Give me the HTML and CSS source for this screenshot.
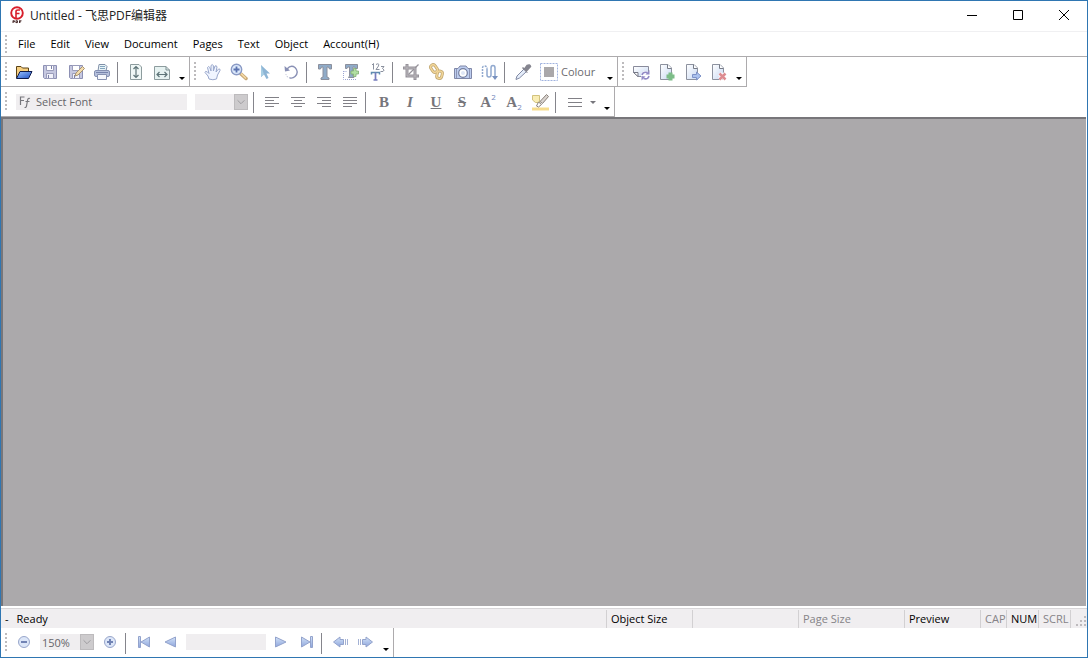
FILE: index.html
```html
<!DOCTYPE html>
<html lang="en">
<head>
<meta charset="utf-8">
<title>Untitled - 飞思PDF编辑器</title>
<link rel="stylesheet" href="styles.css">
</head>
<body>
<svg width="0" height="0" class="defs" aria-hidden="true">
  <defs>
    <linearGradient id="blue" x1="0" y1="0" x2="0" y2="1"><stop offset="0" stop-color="#d3e3f8"/><stop offset="1" stop-color="#8ea5dc"/></linearGradient>
    <linearGradient id="sheet" x1="0" y1="0" x2="1" y2="1"><stop offset="0" stop-color="#ffffff"/><stop offset="1" stop-color="#c9d9f3"/></linearGradient>
    <linearGradient id="folder" x1="0" y1="0" x2="1" y2="1"><stop offset="0" stop-color="#9cc4ff"/><stop offset="1" stop-color="#1c4fc4"/></linearGradient>
  </defs>
</svg>
<div class="window">
  <header class="titlebar">
    <svg class="logo" viewBox="0 0 16 18"><circle cx="8" cy="7" r="5.8" fill="none" stroke="#d81f2c" stroke-width="1.9"/><path d="M7 12V5.500Q7 4 9 4H11M7 7.500H10.500" fill="none" stroke="#d81f2c" stroke-width="1.600"/><path d="M4 14.500V17M4 14.800H5.500V15.800H4M7 14.500V17M7 14.800H8.500V16.600H7M10.500 14.500V17M10.500 14.800H12.500M10.500 15.900H12" fill="none" stroke="#3a1a1a" stroke-width=".9"/></svg>
    <h1>Untitled - 飞思PDF编辑器</h1>
    <button class="win" aria-label="Minimize"><svg viewBox="0 0 12 12"><path d="M1 6.500H11" /></svg></button>
    <button class="win" aria-label="Maximize"><svg viewBox="0 0 12 12"><path d="M1.500 1.500H10.500V10.500H1.500Z"/></svg></button>
    <button class="win" aria-label="Close"><svg viewBox="0 0 12 12"><path d="M1 1L11 11M11 1L1 11"/></svg></button>
  </header>
  <nav class="menubar">
    <span class="grip"></span>
    <button>File</button><button>Edit</button><button>View</button><button>Document</button><button>Pages</button><button>Text</button><button>Object</button><button>Account(H)</button>
  </nav>
  <div class="bars">
    <div class="toolbar" role="toolbar" aria-label="Standard">
      <span class="grip"></span>
      <button class="tool" aria-label="Open"><svg viewBox="0 0 18 18"><path d="M1.500 15V3.500H6L7.500 5H13.500V8" fill="#f6cf80" stroke="#5b4316"/><path d="M1.500 15.500L5 8.500H17L13.500 15.500Z" fill="url(#folder)" stroke="#0d1b4c"/></svg></button>
      <button class="tool" aria-label="Save"><svg viewBox="0 0 18 18"><path d="M2.500 2.500H15.500V15.500H3.500L2.500 14.500Z" fill="#c6c8e0" stroke="#8d90b4"/><path d="M5.500 2.500H12.500V7.500H5.500Z" fill="#fff" stroke="#9a9dbb"/><path d="M5.500 10.500H12.500V15.500H5.500Z" fill="#f2f2fa" stroke="#9a9dbb"/><path d="M7.500 12V15M10.500 3V6" stroke="#7c80a8"/></svg></button>
      <button class="tool" aria-label="Save as"><svg viewBox="0 0 18 18"><path d="M2.500 2.500H15.500V15.500H3.500L2.500 14.500Z" fill="#c6c8e0" stroke="#8d90b4"/><path d="M5.500 2.500H12.500V7.500H5.500Z" fill="#fff" stroke="#9a9dbb"/><path d="M5.500 10.500H12.500V15.500H5.500Z" fill="#f2f2fa" stroke="#9a9dbb"/><path d="M7.500 12V15" stroke="#7c80a8"/><path d="M8 13L9 10L15.500 3.500L17.500 5.500L11 12Z" fill="#f3dcae" stroke="#a89470"/></svg></button>
      <button class="tool" aria-label="Print"><svg viewBox="0 0 18 18"><path d="M5 8L6 1.500H12L14 3.500L13 8" fill="#eaf4f8" stroke="#8090a8"/><path d="M7 3.500H12M7 5.500H12" stroke="#83a5bd"/><rect x="1.500" y="7.500" width="15" height="6" rx="1.500" fill="#b5c0dc" stroke="#8590b2"/><path d="M4.500 11.500H13.500V16.500H4.500Z" fill="#f5f7fc" stroke="#8792b2"/><path d="M3 9.500H15" stroke="#7784ad"/></svg></button>
      <span class="sep"></span>
      <button class="tool" aria-label="Fit height"><svg viewBox="0 0 18 18"><path d="M3.500 1.500H12L14.500 4V16.500H3.500Z" fill="#eff7f6" stroke="#8d9c9e"/><path d="M9 4V14M6.500 6L9 3.500L11.500 6M6.500 12L9 14.500L11.500 12" fill="none" stroke="#5e7478" stroke-width="1.200"/></svg></button>
      <button class="tool" aria-label="Fit width"><svg viewBox="0 0 18 18"><path d="M1.500 3.500H13L16.500 7V16.500H1.500Z" fill="#e6f2f1" stroke="#8d9c9e"/><path d="M13 3.500V7H16.500" fill="none" stroke="#7d8f92"/><path d="M4 11.500H14M6.500 9L4 11.500L6.500 14M11.500 9L14 11.500L11.500 14" fill="none" stroke="#5e7478" stroke-width="1.200"/></svg></button>
      <button class="more" aria-label="More standard tools"></button>
    </div>
    <div class="toolbar" role="toolbar" aria-label="Editing">
      <span class="grip"></span>
      <button class="tool" aria-label="Hand"><svg viewBox="0 0 18 18"><path d="M5 16L4 13L1 9.500Q1 7.500 3.500 9L5 10.500L3.500 4.500Q4.500 2.500 5.800 4.500L7 8L7 2.500Q8.200 .8 9.400 2.500V8L11 3Q12.500 2 13 4L12 9L14.500 6Q16.500 5.500 16 7.500L13.500 12L12.500 16Q9 17.500 5 16Z" fill="#f0f5ff" stroke="#9aa8cc"/></svg></button>
      <button class="tool" aria-label="Zoom"><svg viewBox="0 0 18 18"><path d="M11 11L16 15.500" stroke="#c8a878" stroke-width="3.500" stroke-linecap="round"/><path d="M11 10.500L16 15.500" stroke="#f7dba5" stroke-width="1.500"/><circle cx="6.500" cy="6.500" r="5.200" fill="#dce9fb" stroke="#8a9ac5" stroke-width="1.400"/><path d="M3.500 6.500H9.500M6.500 3.500V9.500" stroke="#5b72af" stroke-width="1.800"/></svg></button>
      <button class="tool" aria-label="Select"><svg viewBox="0 0 18 18"><path d="M5 2V14L8 11.500L10.500 16L12.500 15L10.500 10.500H14Z" fill="#8eb5d5"/><path d="M5 2V14L8 11.500" fill="#a9cfe4"/></svg></button>
      <button class="tool" aria-label="Rotate"><svg viewBox="0 0 18 18"><path d="M5 6Q9 1.500 13 4.500Q17.500 9 13 13.500Q11 15.500 8 15" fill="none" stroke="#8990b5" stroke-width="1.400"/><path d="M8 15Q5 14.500 4 11.500" fill="none" stroke="#8990b5" stroke-dasharray="1 1.500"/><path d="M2.500 3L3 8.500L8 7.500Z" fill="#8990b5"/></svg></button>
      <span class="sep"></span>
      <button class="tool" aria-label="Edit text"><svg viewBox="0 0 18 18"><path d="M2.500 1.500H15.500V6H13.500L12.500 4H11V14L13 15V16.500H5V15L7 14V4H5.500L4.500 6H2.500Z" fill="#8fabc8" stroke="#8b8f9c"/></svg></button>
      <button class="tool" aria-label="Add text"><svg viewBox="0 0 18 18"><path d="M1.500 8V16.500H15M1.500 8.500H5" fill="none" stroke="#9ca5d2" stroke-dasharray="1 1"/><path d="M3.500 1.500H15.500V5.500H13.500L12.500 4H11V13L12 14.500H6.500L7.500 13V4H6L5 5.500H3.500Z" fill="#8fabc8" stroke="#8b8f9c"/><path d="M11.500 5.500H14V8H16.500V11H14V13.500H11.500V11H9V8H11.500Z" fill="#b1dfa2" stroke="#80ac72" stroke-width=".8"/></svg></button>
      <button class="tool" aria-label="Number text"><svg viewBox="0 0 18 18"><path d="M4 2L5.500 .5V6.500M8 1.500Q11.500 -.5 10.500 3L8 6.500H11.500M13 3.500H16L14.500 5.500Q17.500 7 15 8.500H12.500" fill="none" stroke="#8a909e"/><path d="M3.500 11.500V9.500H11.500V11.500" fill="none" stroke="#5f8cb0" stroke-width="1.500"/><path d="M7.500 9.500V17M5.500 17H9.500" fill="none" stroke="#777dbd" stroke-width="1.700"/></svg></button>
      <span class="sep"></span>
      <button class="tool" aria-label="Crop"><svg viewBox="0 0 18 18"><path d="M5 1V13H17M1 5H13V17" fill="none" stroke="#96929a" stroke-width="3"/><path d="M6.500 11.500L16.500 1.500" stroke="#96929a" stroke-width="1.200"/><path d="M5 2V13H16M2 5H13V16" fill="none" stroke="#bab7bb"/></svg></button>
      <button class="tool" aria-label="Link"><svg viewBox="0 0 18 18"><rect x="3.500" y="1.500" width="5" height="8" rx="2.500" transform="rotate(-35 6 5.500)" fill="none" stroke="#bfa670" stroke-width="3"/><rect x="9" y="8" width="5" height="7.500" rx="2.500" transform="rotate(15 11.500 12)" fill="none" stroke="#bfa670" stroke-width="3"/><rect x="3.500" y="1.500" width="5" height="8" rx="2.500" transform="rotate(-35 6 5.500)" fill="none" stroke="#f2d699" stroke-width="1.500"/><rect x="9" y="8" width="5" height="7.500" rx="2.500" transform="rotate(15 11.500 12)" fill="none" stroke="#f2d699" stroke-width="1.500"/></svg></button>
      <button class="tool" aria-label="Snapshot"><svg viewBox="0 0 18 18"><path d="M.5 5.500H4L6 3H12L14 5.500H17.500V15.500H.5Z" fill="#bdcdef" stroke="#8088a8"/><path d="M2.500 6V15M15.500 6V15" stroke="#8d96b6"/><circle cx="9" cy="10" r="4.300" fill="#fff" stroke="#747fa0" stroke-width="1.200"/><circle cx="9" cy="10" r="2" fill="#dfe7f6"/></svg></button>
      <button class="tool" aria-label="Reorder"><svg viewBox="0 0 18 18"><path d="M2.500 14V5Q2.500 3 4.500 3Q7 3 7 5.500" fill="none" stroke="#91a9cf" stroke-width="1.500" stroke-dasharray="2 1"/><path d="M7 5.500V12Q7 14 9 14Q11 14 11 12V5Q11 2.500 13 2.500Q15 2.500 15 5V15" fill="none" stroke="#91a9cf" stroke-width="1.500"/><path d="M12 13H18L15 17Z" fill="#7891bf"/></svg></button>
      <span class="sep"></span>
      <button class="tool" aria-label="Pick colour"><svg viewBox="0 0 18 18"><path d="M2 16L3 13L10 6L12.500 8.500L5.500 15L2 16.500Z" fill="#e5edfa" stroke="#8189a3"/><path d="M8.500 4.500L13.500 9.500M10.500 6L13 2.500Q16 1 16.500 3.500L12.500 8Z" fill="#85858f" stroke="#85858f" stroke-width="1.500"/></svg></button>
      <button class="colour"><svg viewBox="0 0 18 18"><rect x=".5" y=".5" width="17" height="17" fill="none" stroke="#a0b3df" stroke-dasharray="2 1"/><path d="M4 4H14V14H4Z" fill="#aaa8aa"/></svg>Colour</button>
      <button class="more" aria-label="More editing tools"></button>
    </div>
    <div class="toolbar" role="toolbar" aria-label="Pages">
      <span class="grip"></span>
      <button class="tool" aria-label="Rotate page"><svg viewBox="0 0 18 18"><path d="M1.500 3.500H16.500V13.500H6L1.500 9.500Z" fill="url(#sheet)" stroke="#898b9b"/><path d="M1.500 9.500H6V13.500Z" fill="#fff" stroke="#777987"/><circle cx="13.500" cy="12.500" r="4.500" fill="#fff"/><path d="M10 12Q11 8.500 15.500 9.500M17 13Q16 17 11.500 15.500" fill="none" stroke="#928ac6" stroke-width="1.600"/><path d="M17.500 7V11.500H13.500ZM9.500 17.500V13L13.500 13.500Z" fill="#928ac6"/></svg></button>
      <button class="tool" aria-label="Insert page"><svg viewBox="0 0 18 18"><path d="M2.500 1.500H10L13.500 5V16.500H2.500Z" fill="url(#sheet)" stroke="#8d929f"/><path d="M9.500 1.500V5.500H13.500" fill="#fff" stroke="#777c88"/><path d="M11.500 10.500H13.500V12.500H15.500V14.500H13.500V16.500H11.500V14.500H9.500V12.500H11.500Z" fill="#8dce93" stroke="#7dbd88" stroke-width="2"/></svg></button>
      <button class="tool" aria-label="Extract page"><svg viewBox="0 0 18 18"><path d="M2.500 1.500H10L13.500 5V16.500H2.500Z" fill="url(#sheet)" stroke="#8d929f"/><path d="M9.500 1.500V5.500H13.500" fill="#fff" stroke="#777c88"/><path d="M8.500 11.500H12.500V9L17 13L12.500 17V14.500H8.500Z" fill="#abc2ef" stroke="#7d92c8"/></svg></button>
      <button class="tool" aria-label="Delete page"><svg viewBox="0 0 18 18"><path d="M2.500 1.500H10L13.500 5V16.500H2.500Z" fill="url(#sheet)" stroke="#8d929f"/><path d="M9.500 1.500V5.500H13.500" fill="#fff" stroke="#777c88"/><path d="M9.500 10.500L15.500 16.500M15.500 10.500L9.500 16.500" stroke="#fff" stroke-width="4"/><path d="M9.500 10.500L15.500 16.500M15.500 10.500L9.500 16.500" stroke="#dd8c91" stroke-width="2.500"/></svg></button>
      <button class="more" aria-label="More page tools"></button>
    </div>
  </div>
  <div class="bars">
    <div class="toolbar" role="toolbar" aria-label="Text format">
      <span class="grip"></span>
      <label class="font"><svg viewBox="0 0 12 12"><path d="M1.500 9V1H5.500M1.500 4.500H5" fill="none" stroke="#77777c" stroke-width="1.200"/><path d="M11 2.500Q9 1.500 8.500 4.500L7.500 10Q7 12 5.500 11.500M6.500 5.500H10.500" fill="none" stroke="#77777c" stroke-width="1.200"/></svg><input type="text" value="Select Font" aria-label="Font"></label>
      <span class="combo size"><select aria-label="Font size"><option></option></select><svg viewBox="0 0 14 16"><path d="M3 6L7 10L11 6"/></svg></span>
      <span class="sep"></span>
      <button class="tool lines" aria-label="Align left"><svg viewBox="0 0 18 18"><path d="M2 4.500H16M2 7.500H11M2 10.500H16M2 13.500H11"/></svg></button>
      <button class="tool lines" aria-label="Align centre"><svg viewBox="0 0 18 18"><path d="M2 4.500H16M5 7.500H13M2 10.500H16M5 13.500H13"/></svg></button>
      <button class="tool lines" aria-label="Align right"><svg viewBox="0 0 18 18"><path d="M2 4.500H16M7 7.500H16M2 10.500H16M7 13.500H16"/></svg></button>
      <button class="tool lines" aria-label="Justify"><svg viewBox="0 0 18 18"><path d="M2 4.500H16M2 7.500H16M2 10.500H16M2 13.500H11"/></svg></button>
      <span class="sep"></span>
      <button class="tool letter"><b>B</b></button>
      <button class="tool letter"><i>I</i></button>
      <button class="tool letter"><u>U</u></button>
      <button class="tool letter"><s>S</s></button>
      <button class="tool letter"><span>A<sup>2</sup></span></button>
      <button class="tool letter"><span>A<sub>2</sub></span></button>
      <button class="tool" aria-label="Highlight"><svg viewBox="0 0 18 18"><path d="M1.500 2.500H8.500V9.500H4.500L1.500 7Z" fill="#f9edb4" stroke="#d2c27e"/><path d="M1 16H18" stroke="#f6dc8d" stroke-width="3"/><path d="M5.500 13L7.500 9L10.500 11.500L7.500 14Z" fill="#fff" stroke="#8a827b"/><path d="M9 8.500L15.500 1.500L17.500 3.500L11.500 10.500Z" fill="#d9d3cf" stroke="#8a827b"/></svg></button>
      <span class="sep"></span>
      <button class="style lines" aria-label="Line spacing"><svg viewBox="0 0 30 18"><path d="M2 5.500H16M2 9.500H16M2 13.500H16"/><path d="M24 8H30L27 11Z" class="tip"/></svg></button>
      <button class="more" aria-label="More text tools"></button>
    </div>
  </div>
  <main class="canvas"></main>
  <footer class="status">
    <span class="ready"><span>-</span><span>Ready</span></span>
    <span class="cell c-object">Object Size</span>
    <span class="cell c-page"></span>
    <span class="cell c-page dim">Page Size</span>
    <span class="cell c-preview">Preview</span>
    <span class="cell c-cap dim">CAP</span>
    <span class="cell c-key">NUM</span>
    <span class="cell c-key dim">SCRL</span>
    <span class="cell c-resize"><svg viewBox="0 0 10 10"><path d="M8 0H10V2H8ZM4 4H6V6H4ZM8 4H10V6H8ZM0 8H2V10H0ZM4 8H6V10H4ZM8 8H10V10H8Z" fill="#bdbabd"/></svg></span>
  </footer>
  <div class="bars">
    <div class="toolbar navigation" role="toolbar" aria-label="Navigation">
      <span class="grip"></span>
      <button class="tool" aria-label="Zoom out"><svg viewBox="0 0 18 18"><circle cx="9" cy="9" r="5.500" fill="#dce6f8" stroke="#98a6cb"/><path d="M6 9H12" stroke="#7183b4" stroke-width="2"/></svg></button>
      <span class="combo zoom"><select aria-label="Zoom level"><option>150%</option></select><svg viewBox="0 0 14 16"><path d="M3 6L7 10L11 6"/></svg></span>
      <button class="tool" aria-label="Zoom in"><svg viewBox="0 0 18 18"><circle cx="9" cy="9" r="5.500" fill="#dce6f8" stroke="#98a6cb"/><path d="M6 9H12M9 6V12" stroke="#7183b4" stroke-width="2"/></svg></button>
      <span class="sep"></span>
      <button class="tool" aria-label="First page"><svg viewBox="0 0 18 18"><path d="M3.500 3.500H5.500V14.500H3.500ZM14.500 4V14L6 9Z" fill="url(#blue)" stroke="#93a3cc"/></svg></button>
      <button class="tool" aria-label="Previous page"><svg viewBox="0 0 18 18"><path d="M14.500 4V14L4 9Z" fill="url(#blue)" stroke="#93a3cc"/></svg></button>
      <input class="page" type="text" aria-label="Page number">
      <button class="tool" aria-label="Next page"><svg viewBox="0 0 18 18"><path d="M4.500 4V14L15 9Z" fill="url(#blue)" stroke="#93a3cc"/></svg></button>
      <button class="tool" aria-label="Last page"><svg viewBox="0 0 18 18"><path d="M13.500 3.500H15.500V14.500H13.500ZM4.500 4V14L13 9Z" fill="url(#blue)" stroke="#93a3cc"/></svg></button>
      <span class="sep"></span>
      <button class="tool" aria-label="Back"><svg viewBox="0 0 18 18"><path d="M2.500 9L9 4V6.500H12.500V11.500H9V14Z" fill="url(#blue)" stroke="#93a3cc"/><path d="M14.500 6V12M16.500 6V12" stroke="#a3b1d4"/></svg></button>
      <button class="tool" aria-label="Forward"><svg viewBox="0 0 18 18"><path d="M15.500 9L9 4V6.500H5.500V11.500H9V14Z" fill="url(#blue)" stroke="#93a3cc"/><path d="M3.500 6V12M1.500 6V12" stroke="#a3b1d4"/></svg></button>
      <button class="more" aria-label="More navigation tools"></button>
    </div>
  </div>
</div>
</body>
</html>
```
FILE: styles.css
```css
* { box-sizing: border-box; }
body { margin: 0; }
.defs { display: block; width: 0; height: 0; }
.window, .window button, .window input, .window select {
  font-family: "Open Sans", "Noto Sans", "Noto Sans CJK SC", sans-serif;
  font-size: 11px;
}
.window {
  display: flex;
  flex-direction: column;
  height: 100vh;
  background: #fff;
  border: 1px solid #2f76b2;
  color: #000;
}
button {
  display: flex;
  align-items: center;
  justify-content: center;
  margin: 0;
  padding: 0;
  border: 0;
  background: none;
  color: inherit;
}
svg { display: block; flex: none; }

.titlebar {
  display: flex;
  align-items: stretch;
  height: 31px;
  border-bottom: 1px solid #f0f0f2;
}
.logo { width: 16px; height: 18px; margin: 5px 5px 0 8px; }
h1 {
  flex: 1;
  margin: 0;
  font-size: 12px;
  font-weight: 400;
  line-height: 30px;
  color: #222;
}
.win { width: 46px; height: 28px; }
.win svg { width: 12px; height: 12px; }
.win path { fill: none; stroke: #000; stroke-width: 1; }

.grip {
  flex: none;
  width: 2px;
  margin: 5px 4px 4px;
  background: repeating-linear-gradient(#bdbbbd 0 2px, transparent 2px 4px);
}
.menubar {
  display: flex;
  height: 25px;
  border-bottom: 1px solid #adabad;
}
.menubar .grip { margin-top: 3px; margin-bottom: 1px; }
.menubar button { padding: 0 8px 2px 7px; }

.bars { display: flex; flex: none; }
.toolbar {
  display: flex;
  height: 30px;
  border-right: 1px solid #adabad;
  border-bottom: 1px solid #adabad;
}
.tool { width: 26px; flex: none; }
.tool svg, .colour svg { width: 18px; height: 18px; }
.lines path { stroke: #818086; }
.sep {
  flex: none;
  width: 8px;
  margin: 5px 0 3px;
  background: linear-gradient(#85858c, #85858c) 2px 0 / 1px 100% no-repeat;
}
.more { width: 14px; align-items: flex-end; padding-bottom: 6px; }
.more::after {
  content: "";
  border: 3px solid transparent;
  border-top-color: #000;
  border-bottom: 0;
}
.colour { gap: 3px; padding: 0 8px 0 4px; color: #6c6b6e; }

.font, .combo, .page { background: #f0eef0; margin: 7px 0 6px; color: #656468; }
.font { display: flex; align-items: center; gap: 5px; width: 171px; margin-left: 5px; padding-left: 3px; }
.font svg { width: 12px; height: 12px; }
.font input {
  min-width: 0;
  flex: 1;
  padding: 0 0 1px;
  border: 0;
  background: none;
  color: inherit;
}
.combo { display: grid; grid-template-columns: 1fr 14px; height: 16px; }
.combo select {
  grid-area: 1 / 1 / 2 / 3;
  width: 100%;
  min-width: 0;
  padding: 0 2px;
  border: 0;
  appearance: none;
  background: none;
  color: inherit;
}
.combo svg {
  grid-area: 1 / 2;
  width: 14px;
  height: 16px;
  background: #cdcbcd;
  border: 1px solid #bdbbbd;
  pointer-events: none;
}
.combo path { fill: none; stroke: #969498; stroke-width: 1; }
.size { width: 53px; margin-left: 8px; margin-right: 3px; }
.zoom { width: 54px; margin-left: 3px; margin-right: 3px; }
.page { width: 80px; margin-left: 3px; margin-right: 1px; padding: 0 2px; border: 0; }

.window .letter {
  padding-top: 1px;
  font-family: "Liberation Serif", serif;
  font-size: 15px;
  font-weight: 700;
  color: #77767c;
}
.letter sup, .letter sub { font: 8px "Open Sans", sans-serif; color: #7186ba; line-height: 0; }
.letter sup { vertical-align: 7px; }
.letter sub { vertical-align: -3px; }
.style { width: 39px; }
.style svg { width: 30px; height: 18px; }
.style .tip { fill: #77767c; stroke: none; }

.canvas {
  flex: 1;
  min-height: 0;
  margin: 0 1px 2px 0;
  border-top: 2px solid #77767a;
  border-left: 2px solid #77767a;
  background: #aba9ab;
}
.status {
  display: flex;
  flex: none;
  height: 20px;
  padding-top: 1px;
  border-top: 1px solid #d8d6d8;
  background: #f0eef0;
  line-height: 18px;
  white-space: nowrap;
}
.ready { display: flex; gap: 8px; flex: 1; padding-left: 4px; }
.cell { flex: none; padding-left: 4px; border-left: 1px solid #d2d0d2; }
.dim { color: #858387; }
.c-object { width: 86px; }
.c-page { width: 106px; }
.c-preview { width: 76px; }
.c-cap { width: 26px; }
.c-key { width: 32px; }
.c-resize { width: 17px; padding: 6px 0 0 5px; }
.c-resize svg { width: 10px; height: 10px; }
.navigation { height: 29px; border-bottom: 0; }
.navigation .combo, .navigation .page { margin-top: 6px; margin-bottom: 7px; }
.navigation .tool { padding-bottom: 2px; }
```
